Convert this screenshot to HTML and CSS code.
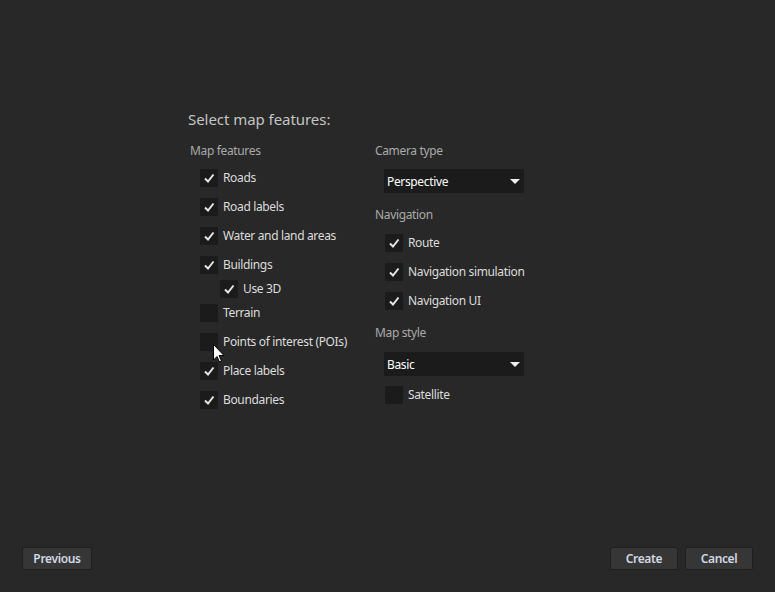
FILE: index.html
```html
<!DOCTYPE html>
<html>
<head>
<meta charset="utf-8">
<link rel="stylesheet" href="styles.css">
</head>
<body>
<div class="page">
  <div class="content">
    <div class="title">Select map features:</div>
    <div class="columns">
      <div class="col col-left">
        <div class="header">Map features</div>
        <div class="row"><span class="cb on"><svg viewBox="0 0 18 18"><path d="M5 9.5 L8 12.5 L13.5 5.5"/></svg></span><span class="label">Roads</span></div>
        <div class="row"><span class="cb on"><svg viewBox="0 0 18 18"><path d="M5 9.5 L8 12.5 L13.5 5.5"/></svg></span><span class="label">Road labels</span></div>
        <div class="row"><span class="cb on"><svg viewBox="0 0 18 18"><path d="M5 9.5 L8 12.5 L13.5 5.5"/></svg></span><span class="label">Water and land areas</span></div>
        <div class="row"><span class="cb on"><svg viewBox="0 0 18 18"><path d="M5 9.5 L8 12.5 L13.5 5.5"/></svg></span><span class="label">Buildings</span></div>
        <div class="row sub"><span class="cb on"><svg viewBox="0 0 18 18"><path d="M5 9.5 L8 12.5 L13.5 5.5"/></svg></span><span class="label">Use 3D</span></div>
        <div class="row"><span class="cb"></span><span class="label">Terrain</span></div>
        <div class="row poi"><span class="cb"></span><span class="label">Points of interest (POIs)</span>
          <svg class="cursor" viewBox="0 0 12 19" width="12" height="19"><path d="M0.5 0.5 L0.5 16 L4 12.5 L6.5 18 L8.5 17 L6 11.5 L11 11.5 Z" fill="#fff" stroke="#000" stroke-width="1"/></svg>
        </div>
        <div class="row"><span class="cb on"><svg viewBox="0 0 18 18"><path d="M5 9.5 L8 12.5 L13.5 5.5"/></svg></span><span class="label">Place labels</span></div>
        <div class="row"><span class="cb on"><svg viewBox="0 0 18 18"><path d="M5 9.5 L8 12.5 L13.5 5.5"/></svg></span><span class="label">Boundaries</span></div>
      </div>
      <div class="col col-right">
        <div class="header">Camera type</div>
        <div class="select first"><span>Perspective</span><span class="tri"></span></div>
        <div class="header gap">Navigation</div>
        <div class="row"><span class="cb on"><svg viewBox="0 0 18 18"><path d="M5 9.5 L8 12.5 L13.5 5.5"/></svg></span><span class="label">Route</span></div>
        <div class="row"><span class="cb on"><svg viewBox="0 0 18 18"><path d="M5 9.5 L8 12.5 L13.5 5.5"/></svg></span><span class="label">Navigation simulation</span></div>
        <div class="row"><span class="cb on"><svg viewBox="0 0 18 18"><path d="M5 9.5 L8 12.5 L13.5 5.5"/></svg></span><span class="label">Navigation UI</span></div>
        <div class="header gap2">Map style</div>
        <div class="select"><span>Basic</span><span class="tri"></span></div>
        <div class="row after-select"><span class="cb"></span><span class="label">Satellite</span></div>
      </div>
    </div>
  </div>
  <div class="footer">
    <button class="btn btn-prev">Previous</button>
    <div class="right-btns">
      <button class="btn">Create</button>
      <button class="btn">Cancel</button>
    </div>
  </div>
</div>
</body>
</html>
```
FILE: styles.css
```css
html, body {
  margin: 0;
  padding: 0;
  background: #282828;
}
.page {
  width: 775px;
  height: 592px;
  display: flex;
  flex-direction: column;
  font-family: "Noto Sans", "Open Sans", sans-serif;
  font-size: 12px;
  letter-spacing: -0.35px;
  color: #dcdcdc;
  overflow: hidden;
}
.content {
  flex: 1;
  padding: 109px 0 0 188px;
}
.title {
  font-size: 15px;
  line-height: 20px;
  letter-spacing: -0.05px;
  color: #c4c4c4;
  margin-bottom: 13.5px;
}
.columns {
  display: flex;
  padding-left: 2px;
}
.col-left {
  width: 185px;
}
.header {
  line-height: 16px;
  height: 16px;
  color: #aaaaaa;
  margin-bottom: 5px;
}
.row {
  position: relative;
  display: flex;
  align-items: center;
  height: 29px;
  padding-left: 10px;
}
.row.sub {
  height: 19px;
  padding-left: 30px;
}
.cb {
  width: 18px;
  height: 18px;
  background: #1b1b1b;
  margin-right: 5px;
  flex: none;
}
.cb svg {
  display: block;
  width: 18px;
  height: 18px;
}
.cb svg path {
  fill: none;
  stroke: #e6e6e6;
  stroke-width: 2;
}
.label {
  line-height: 16px;
}
.cursor {
  position: absolute;
  left: 23px;
  top: 16px;
}
.select {
  margin: 11px 0 0 9px;
  width: 140px;
  height: 24px;
  background: #1b1b1b;
  display: flex;
  align-items: center;
  justify-content: space-between;
  padding: 1px 4px 0 3px;
  box-sizing: border-box;
  color: #ffffff;
}
.select.first {
  margin-top: 10px;
}
.tri {
  width: 0;
  height: 0;
  border-left: 5px solid transparent;
  border-right: 5px solid transparent;
  border-top: 5px solid #f0f0f0;
}
.header.gap {
  margin-top: 14.5px;
}
.header.gap2 {
  margin-top: 10px;
}
.row.after-select {
  margin-top: 4px;
}
.footer {
  display: flex;
  justify-content: space-between;
  padding: 0 22px 22px 22px;
}
.right-btns {
  display: flex;
  gap: 7px;
}
.btn {
  height: 23px;
  width: 68px;
  background: #363636;
  border: 1px solid #1e1e1e;
  border-radius: 2px;
  color: #d2d8e2;
  font-family: "Noto Sans", "Open Sans", sans-serif;
  font-size: 12px;
  font-weight: 600;
  letter-spacing: -0.35px;
  padding: 0;
}
.btn-prev {
  width: 70px;
}
```
